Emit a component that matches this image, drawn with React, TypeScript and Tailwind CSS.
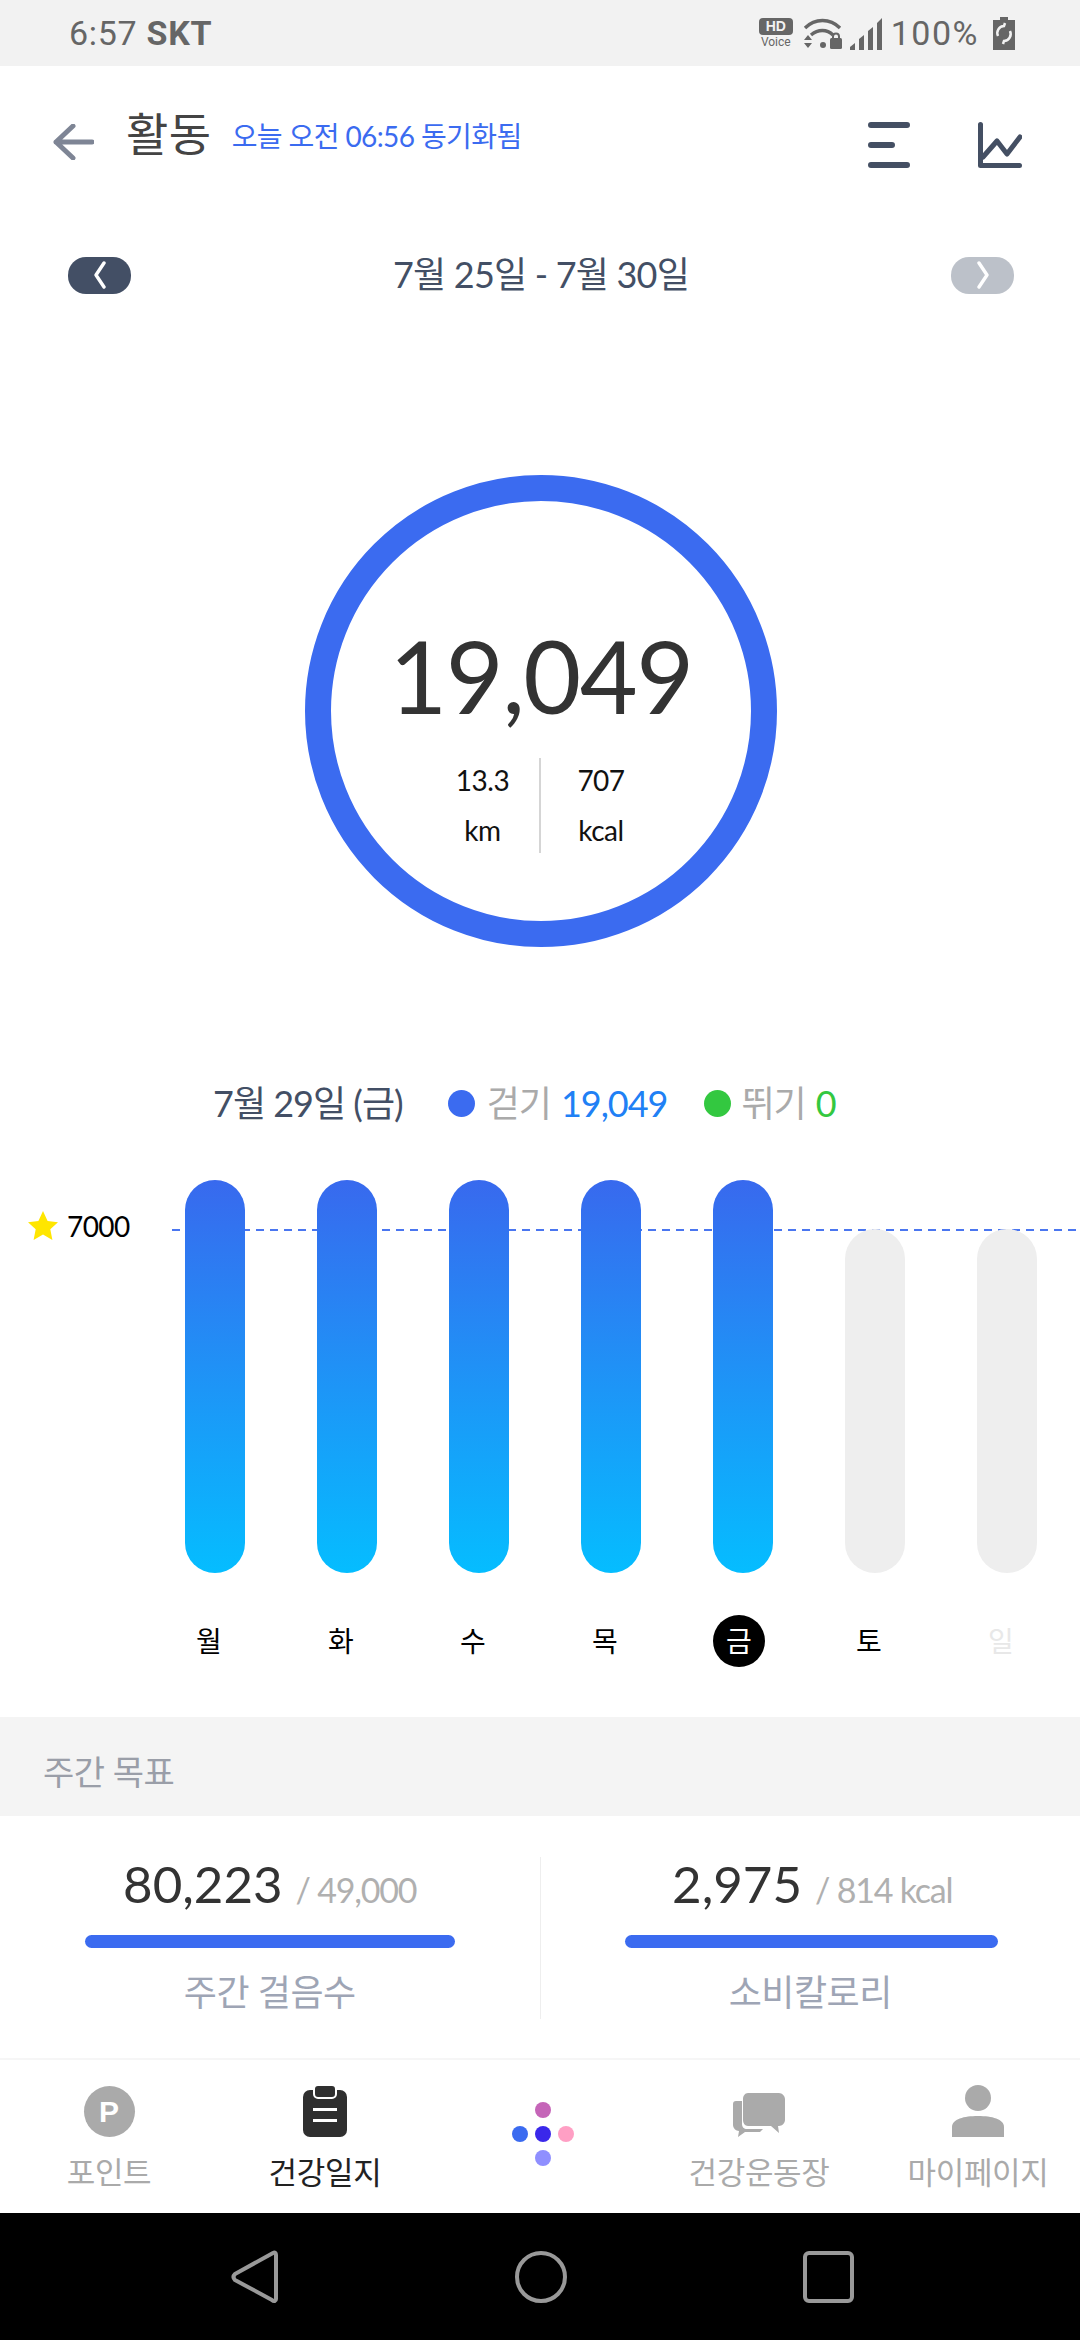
const DAYS = ['월', '화', '수', '목', '금', '토', '일']
const BARS = [true, true, true, true, true, false, false]

function Chevron({ dir }: { dir: 'left' | 'right' }) {
  return (
    <svg width="18" height="28" viewBox="0 0 18 28" fill="none" stroke="white" strokeWidth="3.4" strokeLinecap="round" strokeLinejoin="round">
      <path d={dir === 'left' ? 'M13 2 5 14l8 12' : 'M5 2l8 12-8 12'} />
    </svg>
  )
}

function StatusIcons() {
  return (
    <div className="flex items-center text-[#666]">
      <div className="flex w-[34px] flex-col items-center">
        <span className="flex h-[17px] w-[34px] items-center justify-center rounded-[4px] bg-[#666] font-['Liberation_Sans',sans-serif] text-[14px] leading-none font-bold text-[#f2f2f2]">HD</span>
        <span className="mt-[1px] font-['Roboto',sans-serif] text-[12px] leading-[13px]">Voice</span>
      </div>
      <svg className="ml-[10px]" width="39" height="33" viewBox="0 0 39 33" fill="none">
        <path d="M2 11C12 1 27 1 37 11" stroke="#666" strokeWidth="3.4" />
        <path d="M8 18c7-6 16-6 22 0" stroke="#666" strokeWidth="3.4" />
        <circle cx="20" cy="28" r="3" fill="#666" />
        <path d="M1 23l4-5 4 5zM1 26l4 5 4-5z" fill="#666" />
        <rect x="27" y="21" width="12" height="11" rx="1.5" fill="#666" />
        <path d="M30 22v-2.500a3 3 0 0 1 6 0V22" stroke="#666" strokeWidth="2" />
      </svg>
      <svg className="ml-[8px]" width="34" height="33" viewBox="0 0 34 33" fill="#666">
        <path d="M0 33v-3l5-4v7zM9 33V22l5-4v15zM18 33V14l5-4v23zM27 33V6l5-5v32z" />
      </svg>
      <span className="ml-[7px] font-['Roboto',sans-serif] text-[34px] leading-none tracking-[1.5px]">100%</span>
      <svg className="ml-[14px]" width="22" height="33" viewBox="0 0 22 33">
        <path d="M7 0h8v3h7v30H0V3h7z" fill="#666" />
        <path d="M5 19a7 7 0 0 1 6-10l1-3M17 14a7 7 0 0 1-6 10l-1 3" stroke="#f2f2f2" strokeWidth="2.500" fill="none" />
      </svg>
    </div>
  )
}

function WeekGoal({ value, goal, label, barClass, valueClass = '' }: { value: string; goal: string; label: string; barClass: string; valueClass?: string }) {
  return (
    <div className="flex h-[162px] flex-1 flex-col items-center">
      <div className={`flex h-[64px] items-baseline ${valueClass}`}>
        <span className="text-[51px] leading-[54px] text-[#333]">{value}</span>
        <span className="ml-[13px] text-[34px] leading-[54px] tracking-[-1.2px] text-[#b0b0b0]">{goal}</span>
      </div>
      <div className={`mt-[14px] h-[13px] rounded-full bg-[#3b6bf0] ${barClass}`} />
      <span className="mt-[20px] text-[36px] leading-[48px] tracking-[-0.5px] text-[#9ea5b5]">{label}</span>
    </div>
  )
}

function NavItem({ label, active, icon, className = '' }: { label: string; active?: boolean; icon: React.ReactNode; className?: string }) {
  return (
    <div className={`flex w-[216px] shrink-0 flex-col items-center ${className}`}>
      <div className="flex h-[52px] items-end">{icon}</div>
      <span className={`mt-[14px] text-[31px] leading-[42px] tracking-[-0.3px] ${active ? 'text-[#222]' : 'text-[#aaa]'}`}>{label}</span>
    </div>
  )
}

export default function App() {
  return (
    <div className="flex h-[2340px] w-[1080px] flex-col overflow-hidden bg-white font-['Lato','Noto_Sans_CJK_KR',sans-serif]">
      {/* status bar */}
      <div className="flex h-[66px] items-center justify-between bg-[#f2f2f2] pr-[65px] pl-[69px]">
        <div className="font-['Roboto',sans-serif] text-[34px] leading-none tracking-[0.7px] text-[#666]">
          6:57 <span className="font-bold">SKT</span>
        </div>
        <StatusIcons />
      </div>

      {/* header */}
      <div className="flex h-[144px] items-center pt-[8px] pr-[58px] pl-[53px]">
        <svg width="41" height="36" viewBox="0 0 41 36" fill="none" stroke="#7e8595" strokeWidth="5" strokeLinecap="round" strokeLinejoin="round">
          <path d="M20 2 3 18l17 16M3 18h36" />
        </svg>
        <span className="mb-[16px] ml-[32px] text-[46px] leading-none tracking-[0.5px] text-[#444]">활동</span>
        <span className="mb-[12px] ml-[20px] text-[28px] leading-none tracking-[-0.6px] text-[#3b6bf0]">오늘 오전 06:56 동기화됨</span>
        <div className="mt-[6px] ml-auto flex items-center gap-[66px]">
          <svg width="42" height="46" viewBox="0 0 42 46" fill="none" stroke="#444f63" strokeWidth="6" strokeLinecap="round">
            <path d="M3 3h36M3 23h21M3 43h36" />
          </svg>
          <svg width="46" height="46" viewBox="0 0 46 46" fill="none" stroke="#444f63" strokeWidth="5" strokeLinecap="round" strokeLinejoin="round">
            <path d="M4.500 2.500v41h39M7 35l14-16 10 13 13-17" />
          </svg>
        </div>
      </div>

      {/* date range */}
      <div className="flex h-[130px] items-center justify-between pr-[66px] pl-[68px]">
        <div className="flex h-[37px] w-[63px] items-center justify-center rounded-[18px] bg-[#434f65]">
          <Chevron dir="left" />
        </div>
        <span className="mb-[2px] text-[36px] leading-none tracking-[-0.8px] text-[#434f65]">7월 25일 - 7월 30일</span>
        <div className="flex h-[37px] w-[63px] items-center justify-center rounded-[18px] bg-[#bcc1c9]">
          <Chevron dir="right" />
        </div>
      </div>

      {/* ring */}
      <div className="mt-[135px] ml-[305px] flex h-[472px] w-[472px] flex-col items-center rounded-full border-[26px] border-[#3b6bf0]">
        <div className="mt-[109px] text-[100px] leading-[130px] tracking-[-1.5px] text-[#333]">19,049</div>
        <div className="mt-[18px] ml-[-3px] flex h-[95px] items-stretch">
          <div className="-mt-[3px] flex w-[115px] flex-col items-center pl-[3px] text-[28px] leading-[50px] tracking-[-0.5px] text-[#111]">
            <span>13.3</span>
            <span>km</span>
          </div>
          <div className="w-[2px] bg-[#d5d5d5]" />
          <div className="-mt-[3px] flex w-[115px] flex-col items-center pl-[6px] text-[28px] leading-[50px] tracking-[-0.5px] text-[#111]">
            <span>707</span>
            <span>kcal</span>
          </div>
        </div>
      </div>

      {/* selected day summary */}
      <div className="mt-[126px] flex h-[60px] items-center pl-[213px] text-[36px] leading-none tracking-[-1px]">
        <span className="text-[#434f65]">7월 29일 (금)</span>
        <span className="ml-[45px] h-[27px] w-[27px] rounded-full bg-[#3b6bf0]" />
        <span className="ml-[12px] text-[#aaa]">걷기</span>
        <span className="ml-[10px] text-[#2080f5]">19,049</span>
        <span className="ml-[37px] h-[27px] w-[27px] rounded-full bg-[#33c840]" />
        <span className="ml-[10px] text-[#aaa]">뛰기</span>
        <span className="ml-[10px] text-[#33c840]">0</span>
      </div>

      {/* bars */}
      <div className="relative mt-[47px] h-[393px]">
        <div className="absolute top-[49px] right-0 left-[172px] h-[2px] bg-[repeating-linear-gradient(90deg,#4a76f0_0,#4a76f0_8px,transparent_8px,transparent_14px)]" />
        <div className="absolute top-[29px] left-[28px] flex items-center">
          <svg width="30" height="30" viewBox="0 0 30 30" fill="#ffe600">
            <path d="M15 0l4.600 10 10.400 1.300-7.700 7 2.100 10.700L15 23.600 5.600 29l2.100-10.700-7.700-7L10.400 10z" />
          </svg>
          <span className="ml-[9px] text-[28px] leading-[34px] tracking-[-0.6px] text-black">7000</span>
        </div>
        <div className="relative flex h-full items-end gap-[72px] pl-[185px]">
          {BARS.map((done, i) =>
            done ? (
              <div key={i} className="h-[393px] w-[60px] rounded-full bg-linear-to-b/srgb from-[#3869ee] to-[#05bdff]" />
            ) : (
              <div key={i} className="h-[344px] w-[60px] rounded-full bg-[#eeeeee]" />
            )
          )}
        </div>
      </div>

      {/* day labels */}
      <div className="mt-[42px] flex h-[52px] pl-[143px]">
        {DAYS.map((day, i) => (
          <div key={day} className="flex w-[132px] justify-center">
            <span
              className={`flex h-[52px] w-[52px] items-center justify-center rounded-full text-[28px] leading-none ${
                i === 4 ? 'ml-[4px] bg-black text-white' : i === 6 ? 'text-[#e8e8e8]' : 'text-black'
              }`}>
              {day}
            </span>
          </div>
        ))}
      </div>

      {/* weekly goal */}
      <div className="mt-[50px] flex h-[99px] items-center bg-[#f4f4f4] pt-[10px] pl-[43px] text-[34px] leading-none tracking-[-0.5px] text-[#9a9ea8]">주간 목표</div>
      <div className="flex h-[242px] items-start pt-[41px]">
        <WeekGoal value="80,223" goal="/ 49,000" label="주간 걸음수" barClass="w-[370px]" />
        <div className="h-[162px] w-[1px] bg-[#eeeeee]" />
        <WeekGoal value="2,975" goal="/ 814 kcal" label="소비칼로리" barClass="ml-[3px] w-[373px]" valueClass="ml-[4px]" />
      </div>

      {/* bottom nav */}
      <div className="flex h-[155px] items-start border-t-2 border-[#f6f6f6] pt-[25px] pl-[1px]">
        <NavItem
          label="포인트"
          icon={
            <span className="flex h-[51px] w-[51px] items-center justify-center rounded-full bg-[#aaa] font-['Liberation_Sans',sans-serif] text-[30px] leading-none font-bold text-white">P</span>
          }
        />
        <NavItem
          active
          label="건강일지"
          icon={
            <svg width="44" height="52" viewBox="0 0 44 52">
              <rect y="5" width="44" height="47" rx="7" fill="#2f2f2f" />
              <rect x="11" y="0" width="22" height="13" rx="4" fill="#2f2f2f" stroke="white" strokeWidth="2" />
              <path d="M10 23h24v3H10zM10 34h24v3H10z" fill="white" />
            </svg>
          }
        />
        <div className="ml-[2px] flex w-[216px] shrink-0 flex-col items-center gap-[8px] pt-[17px]">
          <span className="h-[16px] w-[16px] rounded-full bg-[#c565b8]" />
          <div className="flex items-center gap-[7px]">
            <span className="h-[16px] w-[16px] rounded-full bg-[#3b6bf0]" />
            <span className="h-[16px] w-[16px] rounded-full bg-[#3a28ea]" />
            <span className="h-[16px] w-[16px] rounded-full bg-[#ff9fc4]" />
          </div>
          <span className="h-[16px] w-[16px] rounded-full bg-[#8f8fff]" />
        </div>
        <NavItem
          label="건강운동장"
          icon={
            <svg width="52" height="44" viewBox="0 0 52 44" fill="#aaa">
              <path d="M3 8h6v23c0 3 2 5 5 5h16l-3 3H12l-7 5 1-6c-3 0-6-3-6-6V11c0-2 1-3 3-3z" />
              <path d="M15 0h31c3 0 6 3 6 6v21c0 3-3 6-6 6h-1l1 7-8-7H15c-3 0-5-3-5-6V6c0-3 2-6 5-6z" />
            </svg>
          }
        />
        <NavItem
          className="ml-[3px]"
          label="마이페이지"
          icon={
            <svg width="52" height="52" viewBox="0 0 52 52" fill="#aaa">
              <ellipse cx="26" cy="13" rx="13" ry="13" />
              <path d="M0 52V42c0-8 12-11 26-11s26 3 26 11v10z" />
            </svg>
          }
        />
      </div>

      {/* android nav */}
      <div className="flex h-[127px] items-center bg-black pl-[230px]">
        <svg width="48" height="54" viewBox="0 0 48 54" fill="none" stroke="#999" strokeWidth="4" strokeLinejoin="round">
          <path d="M43 3c2-1 3 0 3 2v44c0 2-2 3-4 1L5 30c-2-2-2-4 0-6z" />
        </svg>
        <span className="ml-[237px] h-[52px] w-[52px] rounded-full border-[4px] border-[#999]" />
        <span className="ml-[236px] h-[52px] w-[51px] rounded-[6px] border-[4px] border-[#999]" />
      </div>
    </div>
  )
}
